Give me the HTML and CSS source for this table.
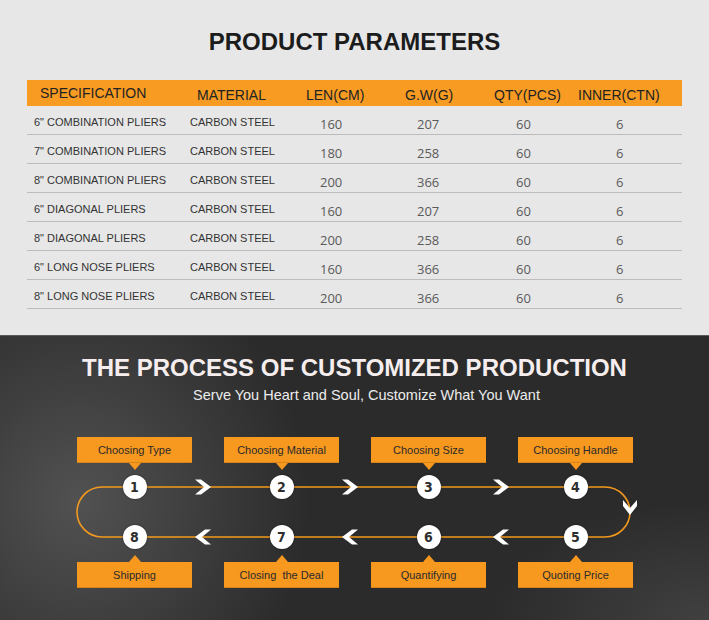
FILE: index.html
```html
<!DOCTYPE html>
<html>
<head>
<meta charset="utf-8">
<link rel="stylesheet" href="styles.css">
</head>
<body>
<section class="params">
  <h1 class="params-title">PRODUCT PARAMETERS</h1>
  <div class="table">
    <div class="thead">
      <div class="th th-spec">SPECIFICATION</div>
      <div class="th">MATERIAL</div>
      <div class="th">LEN(CM)</div>
      <div class="th">G.W(G)</div>
      <div class="th">QTY(PCS)</div>
      <div class="th">INNER(CTN)</div>
    </div>
    <div class="tr"><div class="td spec">6" COMBINATION PLIERS</div><div class="td">CARBON STEEL</div><div class="num">160</div><div class="num">207</div><div class="num">60</div><div class="num">6</div></div>
    <div class="tr"><div class="td spec">7" COMBINATION PLIERS</div><div class="td">CARBON STEEL</div><div class="num">180</div><div class="num">258</div><div class="num">60</div><div class="num">6</div></div>
    <div class="tr"><div class="td spec">8" COMBINATION PLIERS</div><div class="td">CARBON STEEL</div><div class="num">200</div><div class="num">366</div><div class="num">60</div><div class="num">6</div></div>
    <div class="tr"><div class="td spec">6" DIAGONAL PLIERS</div><div class="td">CARBON STEEL</div><div class="num">160</div><div class="num">207</div><div class="num">60</div><div class="num">6</div></div>
    <div class="tr"><div class="td spec">8" DIAGONAL PLIERS</div><div class="td">CARBON STEEL</div><div class="num">200</div><div class="num">258</div><div class="num">60</div><div class="num">6</div></div>
    <div class="tr"><div class="td spec">6" LONG NOSE PLIERS</div><div class="td">CARBON STEEL</div><div class="num">160</div><div class="num">366</div><div class="num">60</div><div class="num">6</div></div>
    <div class="tr"><div class="td spec">8" LONG NOSE PLIERS</div><div class="td">CARBON STEEL</div><div class="num">200</div><div class="num">366</div><div class="num">60</div><div class="num">6</div></div>
  </div>
</section>

<section class="process">
  <h2 class="process-title">THE PROCESS OF CUSTOMIZED PRODUCTION</h2>
  <p class="process-sub">Serve You Heart and Soul, Customize What You Want</p>

  <div class="diagram">
    <div class="steps">
      <div class="step"><div class="tag">Choosing Type</div><div class="ptr-down"></div></div>
      <div class="step"><div class="tag">Choosing Material</div><div class="ptr-down"></div></div>
      <div class="step"><div class="tag">Choosing Size</div><div class="ptr-down"></div></div>
      <div class="step"><div class="tag">Choosing Handle</div><div class="ptr-down"></div></div>
    </div>

    <div class="track">
      <svg class="track-line" width="588" height="85" viewBox="0 0 588 85">
        <path d="M41 17 H544 A25 25 0 0 1 544 67 H41 A25 25 0 0 1 41 17 Z" fill="none" stroke="#f39a1e" stroke-width="1.6"/>
        <g fill="#ffffff">
          <polygon points="134,9.5 140,9.5 150,17 140,24.5 134,24.5 143,17"/>
          <polygon points="281,9.5 287,9.5 297,17 287,24.5 281,24.5 290,17"/>
          <polygon points="432,9.5 438,9.5 448,17 438,24.5 432,24.5 441,17"/>
          <polygon points="150,59.5 144,59.5 134,67 144,74.5 150,74.5 141,67"/>
          <polygon points="297,59.5 291,59.5 281,67 291,74.5 297,74.5 288,67"/>
          <polygon points="448,59.5 442,59.5 432,67 442,74.5 448,74.5 439,67"/>
          <polygon points="562,30 562,36 569,45 576,36 576,30 569,38"/>
        </g>
      </svg>
      <div class="dots">
        <div class="dot-cell"><span class="dot">1</span></div>
        <div class="dot-cell"><span class="dot">2</span></div>
        <div class="dot-cell"><span class="dot">3</span></div>
        <div class="dot-cell"><span class="dot">4</span></div>
      </div>
      <div class="dots">
        <div class="dot-cell"><span class="dot">8</span></div>
        <div class="dot-cell"><span class="dot">7</span></div>
        <div class="dot-cell"><span class="dot">6</span></div>
        <div class="dot-cell"><span class="dot">5</span></div>
      </div>
    </div>

    <div class="steps">
      <div class="step"><div class="ptr-up"></div><div class="tag">Shipping</div></div>
      <div class="step"><div class="ptr-up"></div><div class="tag">Closing&nbsp; the Deal</div></div>
      <div class="step"><div class="ptr-up"></div><div class="tag">Quantifying</div></div>
      <div class="step"><div class="ptr-up"></div><div class="tag">Quoting Price</div></div>
    </div>
  </div>
</section>
</body>
</html>
```

FILE: styles.css
```css
* { box-sizing: border-box; }

html, body {
  margin: 0;
  padding: 0;
}

body {
  width: 709px;
  height: 620px;
  overflow: hidden;
  font-family: "Liberation Sans", Arial, sans-serif;
  background: #2b2b2b;
}

/* ---------- parameters ---------- */
.params {
  background: #e7e7e7;
  height: 335px;
  padding-top: 28px;
}

.params-title {
  margin: 0;
  font-size: 24px;
  line-height: 28px;
  font-weight: bold;
  text-align: center;
  color: #1c1c1c;
}

.table {
  margin: 24px 27px 0;
}

.thead {
  display: grid;
  grid-template-columns: 157px 109px 99px 89px 84px 1fr;
  height: 26px;
  align-items: center;
  background: #f89b22;
  padding-left: 13px;
}

.th {
  font-size: 14px;
  color: #222;
  padding-top: 4px;
  white-space: nowrap;
}

.th-spec {
  padding-top: 0;
}

.tr {
  display: grid;
  grid-template-columns: 163px 130px 97px 99px 100px 1fr;
  height: 29px;
  align-items: center;
  border-bottom: 1px solid #bcbcbc;
  padding-top: 3px;
}

.td {
  font-size: 11px;
  color: #333;
  white-space: nowrap;
}

.spec {
  padding-left: 7px;
}

.num {
  font-family: "Open Sans", "Noto Sans", sans-serif;
  font-size: 13px;
  color: #5a5a5a;
  padding-top: 4px;
}

/* ---------- process ---------- */
.process {
  height: 285px;
  padding-top: 18px;
  border-top: 1px solid #5a5a5a;
  background:
    radial-gradient(ellipse 230px 250px at 80px 165px, rgba(88, 88, 88, 0.85), rgba(88, 88, 88, 0) 100%),
    radial-gradient(ellipse 220px 120px at 709px 285px, rgba(70, 70, 70, 0.8), rgba(70, 70, 70, 0) 100%),
    #2b2b2b;
}

.process-title {
  margin: 0;
  font-size: 24px;
  line-height: 28px;
  font-weight: bold;
  text-align: center;
  color: #f6eeee;
}

.process-sub {
  margin: 4px 0 0;
  padding-left: 24px;
  font-size: 14.5px;
  line-height: 18px;
  text-align: center;
  color: #ececec;
}

.diagram {
  width: 588px;
  margin: 33px 0 0 61px;
}

.steps {
  display: flex;
}

.step {
  width: 147px;
  display: flex;
  flex-direction: column;
  align-items: center;
}

.tag {
  width: 115px;
  height: 26px;
  background: #f7981f;
  border-bottom: 1px solid #d9841a;
  font-size: 11px;
  line-height: 26px;
  text-align: center;
  color: #2a2a2a;
  white-space: nowrap;
}

.ptr-down {
  width: 0;
  height: 0;
  border-left: 6px solid transparent;
  border-right: 6px solid transparent;
  border-top: 7px solid #f7981f;
}

.ptr-up {
  width: 0;
  height: 0;
  border-left: 6px solid transparent;
  border-right: 6px solid transparent;
  border-bottom: 7px solid #f7981f;
}

.track {
  position: relative;
  height: 85px;
  padding: 5px 0 6px;
  display: flex;
  flex-direction: column;
  justify-content: space-between;
}

.track-line {
  position: absolute;
  left: 0;
  top: 0;
}

.dots {
  position: relative;
  display: flex;
}

.dot-cell {
  width: 147px;
  display: flex;
  justify-content: center;
}

.dot {
  width: 24px;
  height: 24px;
  border-radius: 50%;
  background: #fff;
  box-shadow: 0 0 2px rgba(0, 0, 0, 0.6);
  display: flex;
  align-items: center;
  justify-content: center;
  font-family: "DejaVu Sans Condensed", "DejaVu Sans", sans-serif;
  font-stretch: condensed;
  font-weight: bold;
  font-size: 14px;
  color: #2e2e2e;
}
```
